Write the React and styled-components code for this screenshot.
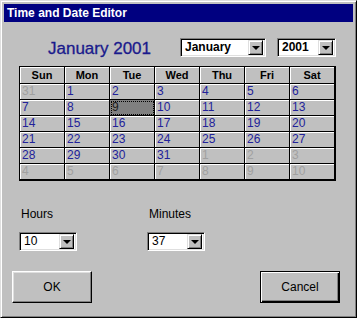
import styled, { createGlobalStyle } from 'styled-components'

const Global = createGlobalStyle`
  body {
    margin: 0;
    background: #c0c0c0;
  }
  * {
    box-sizing: border-box;
  }
`

const Window = styled.div`
  width: 357px;
  height: 318px;
  background: #c0c0c0;
  border: 1px solid;
  border-color: #dfdfdf #000 #000 #dfdfdf;
  box-shadow: inset 1px 1px #fff, inset -1px -1px #808080;
  padding: 3px;
  display: flex;
  flex-direction: column;
  font-family: "Liberation Sans", Arial, sans-serif;
  color: #000;
`

const TitleBar = styled.div`
  height: 18px;
  background: #000080;
  color: #fff;
  font-size: 12px;
  font-weight: bold;
  padding-left: 3px;
  display: flex;
  align-items: center;
`

const Body = styled.div`
  flex: 1;
  padding-top: 16px;
  display: flex;
  flex-direction: column;
`

const TopRow = styled.div`
  display: flex;
  align-items: center;
  height: 19px;
  margin-left: 15px;
`

const Heading = styled.div`
  width: 161px;
  padding-left: 29px;
  font-size: 17px;
  color: #1a1a8c;
  line-height: 19px;
  padding-top: 1px;
  -webkit-text-stroke: 0.3px #1a1a8c;
`

const Field = styled.div`
  width: ${(p) => p.$width}px;
  height: 19px;
  margin-right: ${(p) => p.$gap || 0}px;
  background: #fff;
  border: 1px solid;
  border-color: #808080 #fff #fff #808080;
  box-shadow: inset 1px 1px #000, inset -1px -1px #dfdfdf;
  display: flex;
  align-items: center;
  padding: 0 2px 0 4px;
`

const FieldText = styled.span`
  flex: 1;
  font-size: 12px;
  font-weight: ${(p) => (p.$bold ? 'bold' : 'normal')};
  line-height: 15px;
`

const ArrowButton = styled.div`
  width: 15px;
  height: 15px;
  background: #c0c0c0;
  border: 1px solid;
  border-color: #dfdfdf #000 #000 #dfdfdf;
  box-shadow: inset 1px 1px #fff, inset -1px -1px #808080;
  display: flex;
  align-items: center;
  justify-content: center;
  &::after {
    content: '';
    border-left: 4px solid transparent;
    border-right: 4px solid transparent;
    border-top: 4px solid #000;
    margin-top: 1px;
  }
`

const Select = ({ value, width, gap, bold }) => (
  <Field $width={width} $gap={gap}>
    <FieldText $bold={bold}>{value}</FieldText>
    <ArrowButton />
  </Field>
)

const Calendar = styled.div`
  margin: 9px 0 0 15px;
  width: 317px;
  display: grid;
  grid-template-columns: repeat(7, 45px);
  grid-template-rows: 17px repeat(6, 16px);
  border: 1px solid #000;
`

const HeadCell = styled.div`
  border-right: 1px solid #000;
  border-bottom: 1px solid #000;
  box-shadow: inset 1px 1px #fff;
  font-size: 11px;
  font-weight: bold;
  text-align: center;
  line-height: 16px;
`

const DayCell = styled.div`
  border-right: 1px solid #000;
  border-bottom: 1px solid #000;
  box-shadow: inset 1px 1px #fff;
  font-size: 12px;
  line-height: 15px;
  padding-left: 2px;
  color: ${(p) => (p.$muted ? '#a0a0a0' : '#22229a')};
  ${(p) =>
    p.$selected &&
    `
    background: #808080;
    color: #1a1a1a;
    box-shadow: none;
    outline: 1px dotted #000;
    outline-offset: -2px;
  `}
`

const TimeRow = styled.div`
  display: flex;
  margin: 26px 0 0 15px;
`

const TimeGroup = styled.div`
  width: 128px;
  display: flex;
  flex-direction: column;
`

const Label = styled.div`
  font-size: 12px;
  line-height: 14px;
  height: 14px;
  padding-left: 2px;
  margin-bottom: 11px;
`

const ButtonRow = styled.div`
  display: flex;
  justify-content: space-between;
  margin-top: 20px;
  padding: 0 13px 0 8px;
`

const Button = styled.div`
  width: 80px;
  height: 32px;
  display: flex;
  align-items: center;
  justify-content: center;
  font-size: 12px;
  background: #c0c0c0;
  border: 1px solid;
  border-color: ${(p) => (p.$default ? '#000' : '#fff #000 #000 #fff')};
  box-shadow: ${(p) =>
    p.$default
      ? 'inset 1px 1px #fff, inset -1px -1px #000, inset -2px -2px #808080'
      : 'inset -1px -1px #808080, inset 1px 1px #dfdfdf'};
`

const weekDays = ['Sun', 'Mon', 'Tue', 'Wed', 'Thu', 'Fri', 'Sat']

const buildDays = () => {
  const days = [{ n: 31, muted: true }]
  for (let i = 1; i <= 31; i++) days.push({ n: i })
  for (let i = 1; i <= 10; i++) days.push({ n: i, muted: true })
  return days
}

export default function App() {
  const days = buildDays()
  return (
    <>
      <Global />
      <Window>
        <TitleBar>Time and Date Editor</TitleBar>
        <Body>
          <TopRow>
            <Heading>January 2001</Heading>
            <Select value="January" width={86} gap={11} bold />
            <Select value="2001" width={59} bold />
          </TopRow>
          <Calendar>
            {weekDays.map((d) => (
              <HeadCell key={d}>{d}</HeadCell>
            ))}
            {days.map((d, i) => (
              <DayCell key={i} $muted={d.muted} $selected={!d.muted && d.n === 9}>
                {d.n}
              </DayCell>
            ))}
          </Calendar>
          <TimeRow>
            <TimeGroup>
              <Label>Hours</Label>
              <Select value="10" width={58} />
            </TimeGroup>
            <TimeGroup>
              <Label>Minutes</Label>
              <Select value="37" width={58} />
            </TimeGroup>
          </TimeRow>
          <ButtonRow>
            <Button>OK</Button>
            <Button $default>Cancel</Button>
          </ButtonRow>
        </Body>
      </Window>
    </>
  )
}
